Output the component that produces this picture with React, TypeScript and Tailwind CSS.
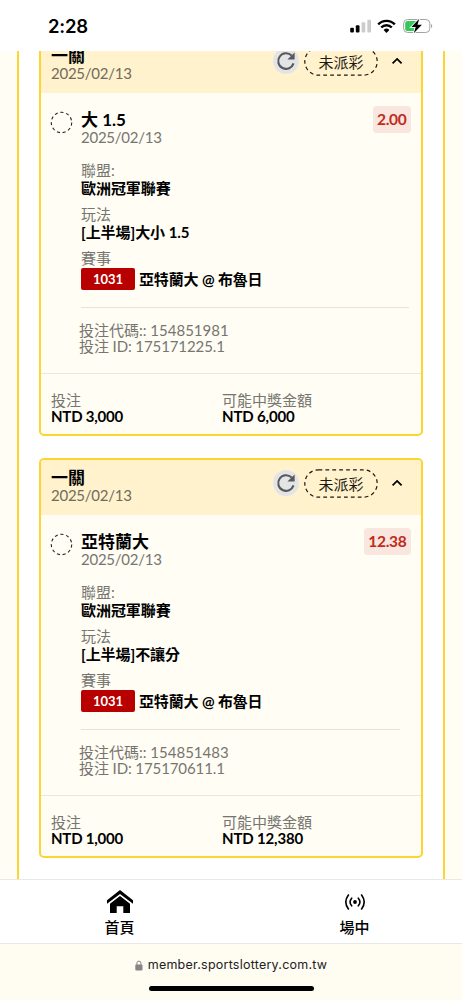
import React from 'react'

type Bet = {
    title: string;
    odds: string;
    market: string;
    code: string;
    id: string;
    stake: string;
    payout: string;
    dividerClass: string;
}

const bets: Bet[] = [
    {
        title: '大 1.5',
        odds: '2.00',
        market: '[上半場]大小 1.5',
        code: '154851981',
        id: '175171225.1',
        stake: 'NTD 3,000',
        payout: 'NTD 6,000',
        dividerClass: 'w-[328px]',
    },
    {
        title: '亞特蘭大',
        odds: '12.38',
        market: '[上半場]不讓分',
        code: '154851483',
        id: '175170611.1',
        stake: 'NTD 1,000',
        payout: 'NTD 12,380',
        dividerClass: 'w-[319px]',
    },
]

function StatusBar() {
    return (
        <header className="flex h-[51px] shrink-0 items-start justify-between bg-white pl-[48px] pr-[29px] z-10">
            <div className="mt-[13px] font-['Inter'] text-[18.5px] leading-[26px] font-semibold tracking-[-0.2px] text-black">2:28</div>
            <div className="mt-[18px] flex items-center">
                <svg width="22" height="16" viewBox="0 0 22 16">
                    <rect x="0.2" y="9.7" width="3.7" height="4.8" rx="1.1" />
                    <rect x="5.8" y="7.2" width="3.7" height="7.3" rx="1.1" />
                    <rect x="11.6" y="4.2" width="3.7" height="10.3" rx="1.1" fill="#ccc" />
                    <rect x="17.3" y="1.7" width="3.7" height="12.8" rx="1.1" fill="#ccc" />
                </svg>
                <svg className="ml-[5px] mr-px" width="19" height="16" viewBox="0 0 19 16" fill="none" stroke="#000" strokeWidth="2.4">
                    <path d="M1.2 6.3 A11.7 11.7 0 0 1 17.8 6.3" />
                    <path d="M4.2 9.5 A7.5 7.5 0 0 1 14.8 9.5" />
                    <path d="M6.6 11.9 A4.2 4.2 0 0 1 12.4 11.9 L9.5 14.9 Z" fill="#000" stroke="none" />
                </svg>
                <svg className="ml-[6px]" width="30" height="16" viewBox="0 0 30 16">
                    <rect x="0.6" y="1.5" width="26.2" height="13" rx="4" fill="none" stroke="#a3a3a3" />
                    <path d="M28 6 C29.7 6.6 29.7 9.4 28 10 Z" fill="#a3a3a3" />
                    <path d="M4.8 3 H14 L12 13 H4.8 Q2.2 13 2.2 10.4 V5.6 Q2.2 3 4.8 3 Z" fill="#34c759" />
                    <path d="M16.3 0.8 L8.4 9 H12.7 L10.8 15.2 L18.9 6.8 H14.5 Z" fill="#000" stroke="#fff" strokeWidth="1.8" paintOrder="stroke" />
                </svg>
            </div>
        </header>
    )
}

function CardHeader() {
    return (
        <div className="flex h-[55px] bg-[#fff2cc] pl-[10px]">
            <div className="w-[222px] pt-[9px]">
                <h2 className="text-[17px] leading-[18px] font-bold">一關</h2>
                <p className="-mt-px text-[15px] leading-[18px] tracking-[-0.25px] text-[#716b5c]">2025/02/13</p>
            </div>
            <div className="mt-[10px] flex h-[26px] w-[26px] items-center justify-center rounded-full bg-[#e3e4e6]">
                <svg width="20" height="20" viewBox="0 0 20 20" fill="none">
                    <path d="M15.6 4.6 A7.8 7.8 0 1 0 17.5 12.4" stroke="#58595b" strokeWidth="2.1" />
                    <path d="M18.6 1.4 V8.6 H11.4 Z" fill="#58595b" />
                </svg>
            </div>
            <div className="ml-[5px] mt-[9px] h-[29px] w-[74px]">
                <div className="grid">
                    <svg className="col-start-1 row-start-1" width="74" height="29" viewBox="0 0 74 29" fill="none">
                        <rect x="0.8" y="0.8" width="72.4" height="27.4" rx="13.7" stroke="#1d1a12" strokeWidth="1.2" strokeDasharray="3.8 3.1" />
                    </svg>
                    <span className="col-start-1 row-start-1 text-center text-[15px] leading-[30px] text-[#1d1a12]">未派彩</span>
                </div>
            </div>
            <svg className="ml-[13px] mt-[18px]" width="12" height="9" viewBox="0 0 12 9" fill="none">
                <path d="M1.6 7.3 L6.1 2.9 L10.6 7.3" stroke="#000" strokeWidth="1.8" />
            </svg>
        </div>
    )
}

function Field({ label, value }: { label: string; value: string }) {
    return (
        <div className="mb-[8px]">
            <div className="text-[#777570]">{label}</div>
            <div className="font-bold tracking-[-0.05px]">{value}</div>
        </div>
    )
}

function BetCard({ bet }: { bet: Bet }) {
    return (
        <article className="h-[400px] shrink-0 overflow-hidden rounded-[5px] border-2 border-[#fdd430] bg-[#fffdf4] text-[15px] leading-[18px]">
            <CardHeader />
            <div className="flex h-[281px] border-b border-[#e9e7e2] pl-[9px] pr-[10px]">
                <svg className="mt-[18px] shrink-0" width="23" height="23" viewBox="0 0 23 23" fill="none">
                    <circle cx="11.5" cy="11.5" r="10.2" stroke="#222" strokeWidth="1.1" strokeDasharray="3.1 2.73" />
                </svg>
                <div className="ml-[8px] min-w-0 flex-1">
                    <div className="flex items-start justify-between">
                        <div className="pt-[18px]">
                            <h3 className="text-[17px] leading-[18px] font-bold">{bet.title}</h3>
                            <p className="-mt-px tracking-[-0.25px] text-[#777570]">2025/02/13</p>
                        </div>
                        <span className="mt-[13px] rounded-[4px] bg-[#f8e6df] px-[4.5px] text-[15.5px] leading-[27px] font-bold tracking-[-0.3px] text-[#c02b20]">{bet.odds}</span>
                    </div>
                    <div className="mt-[15px]">
                        <Field label="聯盟:" value="歐洲冠軍聯賽" />
                        <Field label="玩法" value={bet.market} />
                        <div className="text-[#777570]">賽事</div>
                        <div className="mt-px flex items-center font-bold">
                            <span className="h-[22px] w-[54px] rounded-[2px] bg-[#b90000] text-center text-[13px] leading-[22px] text-white">1031</span>
                            <span className="ml-[4px] whitespace-nowrap tracking-[-0.15px]">亞特蘭大 @ 布魯日</span>
                        </div>
                    </div>
                    <div className={`mt-[17px] h-px bg-[#e5e3dd] ${bet.dividerClass}`} />
                    <div className="-ml-[2px] mt-[14px] leading-[16px] text-[#777570]">
                        <p>投注代碼:: {bet.code}</p>
                        <p className="tracking-[-0.1px]">投注 ID: {bet.id}</p>
                    </div>
                </div>
            </div>
            <div className="grid grid-cols-[171px_1fr] pl-[10px] pt-[18px] leading-[16px]">
                <div>
                    <div className="text-[#777570]">投注</div>
                    <div className="font-bold tracking-[-0.2px]">{bet.stake}</div>
                </div>
                <div>
                    <div className="text-[#777570]">可能中獎金額</div>
                    <div className="font-bold tracking-[-0.15px]">{bet.payout}</div>
                </div>
            </div>
        </article>
    )
}

function BottomNav() {
    return (
        <nav className="flex h-[65px] shrink-0 border-y border-[#e8e8e6] bg-white pl-[2px] text-[15px] leading-[18px] font-medium">
            <a className="flex w-[235px] shrink-0 flex-col items-center">
                <svg className="mt-[9px]" width="28" height="26" viewBox="0 0 28 26">
                    <path d="M1 11.3 L14 1 L27 11.3 V14.8 L14 4.9 L1 14.8 Z" />
                    <path d="M14 7 L24 14.7 V24 H17.3 V17.3 H10.7 V24 H4 V14.7 Z" />
                </svg>
                <span className="mt-[3px]">首頁</span>
            </a>
            <a className="flex w-[235px] shrink-0 flex-col items-center">
                <svg className="mt-[13px]" width="22" height="18" viewBox="0 0 22 18" fill="none" stroke="#000" strokeWidth="1.6" strokeLinecap="round">
                    <circle cx="11" cy="9" r="1.9" fill="#000" stroke="none" />
                    <path d="M7.7 5.2 Q4.4 9 7.7 12.8 M14.3 5.2 Q17.6 9 14.3 12.8" />
                    <path d="M4.4 2 Q-0.8 9 4.4 16 M17.6 2 Q22.8 9 17.6 16" />
                </svg>
                <span className="mt-[7px]">場中</span>
            </a>
        </nav>
    )
}

function BrowserBar() {
    return (
        <footer className="flex h-[56px] shrink-0 flex-col items-center bg-[#fffcf2]">
            <div className="mt-[12px] flex items-center font-['Inter'] text-[12.5px] leading-[18px] text-[#222]">
                <svg width="8" height="11" viewBox="0 0 8 11">
                    <rect x="0.3" y="4.4" width="7.2" height="6.2" rx="1" fill="#858585" />
                    <path d="M1.9 5 V3.1 A2 2 0 0 1 5.9 3.1 V5" fill="none" stroke="#858585" strokeWidth="1" />
                </svg>
                <span className="ml-[5px] tracking-[0.24px]">member.sportslottery.com.tw</span>
            </div>
            <div className="mt-[12px] h-[5px] w-[165px] rounded-full bg-black" />
        </footer>
    )
}

export default function App() {
    return (
        <div className="flex h-[1000px] w-[462px] flex-col overflow-hidden bg-[#fffdf4] font-['Lato','Noto_Sans_CJK_TC',sans-serif] text-black">
            <StatusBar />
            <main className="h-[828px] shrink-0 overflow-hidden">
                <div className="-mt-[15px] ml-[17px] flex h-[860px] w-[428px] flex-col gap-[22px] border-x-2 border-[#fdd430] bg-white px-[20px]">
                    {bets.map((bet) => (
                        <BetCard key={bet.code} bet={bet} />
                    ))}
                </div>
            </main>
            <BottomNav />
            <BrowserBar />
        </div>
    )
}
